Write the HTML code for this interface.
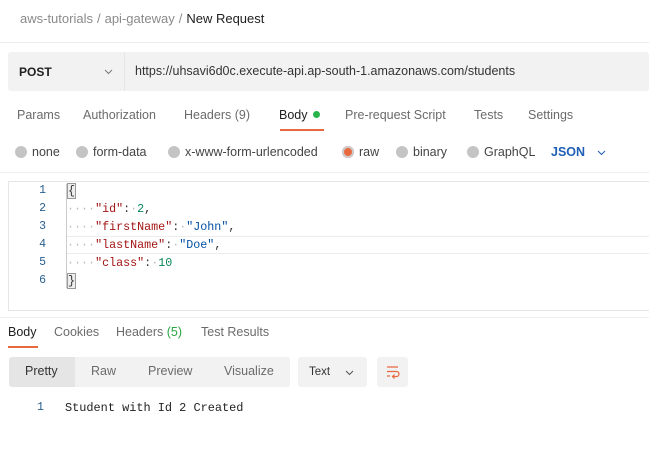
<!DOCTYPE html>
<html><head><meta charset="utf-8"><style>
*{margin:0;padding:0;box-sizing:border-box}
body{width:649px;height:454px;background:#fff;font-family:"Liberation Sans",sans-serif;position:relative;overflow:hidden;color:#212121}
.a{position:absolute;white-space:nowrap}
.g{color:#6b6b6b}
.mono{font-family:"Liberation Mono",monospace;font-size:10px}
.dot{display:inline-block;width:12px;height:12px;border-radius:50%;background:#c4c4c4;vertical-align:-2px;margin-right:5px}
.sl{color:#8a8a8a;margin:0 4px}
</style></head><body>
<div class="a" style="left:20px;top:11px;font-size:13px"><span style="color:#8a8a8a">aws-tutorials</span><span class="sl">/</span><span style="color:#8a8a8a">api-gateway</span><span class="sl">/</span><span style="color:#212121">New Request</span></div>
<div class="a" style="left:0;top:42px;width:649px;height:1px;background:#ececec"></div>
<div class="a" style="left:8px;top:52px;width:641px;height:39px;background:#f2f2f2;border-radius:3px"></div>
<div class="a" style="left:124px;top:52px;width:1px;height:39px;background:#e6e6e6"></div>
<div class="a" style="left:19px;top:65px;font-size:12px;font-weight:bold;color:#212121">POST</div>
<svg class="a" style="left:104px;top:69px" width="9" height="6" viewBox="0 0 9 6"><path d="M1 1 4.5 4.5 8 1" fill="none" stroke="#777" stroke-width="1"/></svg>
<div class="a" style="left:135px;top:64px;font-size:12.5px;color:#333">https://uhsavi6d0c.execute-api.ap-south-1.amazonaws.com/students</div>
<div class="a g" style="top:108px;left:17px;font-size:12.5px">Params</div>
<div class="a g" style="top:108px;left:83px;font-size:12.5px">Authorization</div>
<div class="a g" style="top:108px;left:184px;font-size:12.5px">Headers <span>(9)</span></div>
<div class="a" style="top:108px;left:279px;font-size:12.5px;color:#212121">Body <span style="display:inline-block;width:7px;height:7px;border-radius:50%;background:#28b34b;vertical-align:1px;margin-left:2px"></span></div>
<div class="a" style="left:280px;top:129px;width:44px;height:2px;background:#e8693f"></div>
<div class="a g" style="top:108px;left:345px;font-size:12.5px">Pre-request Script</div>
<div class="a g" style="top:108px;left:474px;font-size:12.5px">Tests</div>
<div class="a g" style="top:108px;left:528px;font-size:12.5px">Settings</div>
<div class="a" style="top:145px;left:15px;font-size:12.5px;color:#444"><span class="dot"></span>none</div>
<div class="a" style="top:145px;left:76px;font-size:12.5px;color:#444"><span class="dot"></span>form-data</div>
<div class="a" style="top:145px;left:168px;font-size:12.5px;color:#444"><span class="dot"></span>x-www-form-urlencoded</div>
<div class="a" style="top:145px;left:342px;font-size:12.5px;color:#444"><span class="dot" style="background:#e8693f;box-shadow:0 0 0 2px #ccc inset"></span>raw</div>
<div class="a" style="top:145px;left:396px;font-size:12.5px;color:#444"><span class="dot"></span>binary</div>
<div class="a" style="top:145px;left:467px;font-size:12.5px;color:#444"><span class="dot"></span>GraphQL</div>
<div class="a" style="top:145px;left:551px;font-size:12.5px;color:#1f5fb5;font-weight:bold">JSON</div>
<svg class="a" style="left:597px;top:150px" width="9" height="6" viewBox="0 0 9 6"><path d="M1 1 4.5 4.5 8 1" fill="none" stroke="#1f5fb5" stroke-width="1"/></svg>
<div class="a" style="left:0;top:172px;width:649px;height:1px;background:#eee"></div>
<div class="a" style="left:8px;top:181px;width:641px;height:130px;border:1px solid #e6e6e6;border-right:none"></div>
<div class="a" style="left:67px;top:236px;width:582px;height:18px;border-top:1px solid #ececec;border-bottom:1px solid #ececec"></div>
<div class="a" style="left:66px;top:184px;width:1px;height:104px;background:#ccc"></div>
<div class="a mono" style="left:36px;top:182px;line-height:18px;color:#2a6090;font-size:11.5px;text-align:right;width:10px">1<br>2<br>3<br>4<br>5<br>6</div>
<div class="a mono" style="left:67px;top:182px;line-height:18px;font-size:11.7px;color:#333">
<span style="border:1px solid #999;background:#eee">{</span><br>
<span style="color:#bbb">····</span><span style="color:#a31515">"id"</span>:<span style="color:#bbb">·</span><span style="color:#098658">2</span>,<br>
<span style="color:#bbb">····</span><span style="color:#a31515">"firstName"</span>:<span style="color:#bbb">·</span><span style="color:#0451a5">"John"</span>,<br>
<span style="color:#bbb">····</span><span style="color:#a31515">"lastName"</span>:<span style="color:#bbb">·</span><span style="color:#0451a5">"Doe"</span>,<br>
<span style="color:#bbb">····</span><span style="color:#a31515">"class"</span>:<span style="color:#bbb">·</span><span style="color:#098658">10</span><br>
<span style="border:1px solid #999;background:#eee">}</span></div>
<div class="a" style="left:0;top:317px;width:649px;height:1px;background:#eee"></div>
<div class="a" style="top:325px;left:8px;font-size:12.5px;color:#212121">Body</div>
<div class="a g" style="top:325px;left:54px;font-size:12.5px">Cookies</div>
<div class="a g" style="top:325px;left:116px;font-size:12.5px">Headers <span style="color:#28a745">(5)</span></div>
<div class="a g" style="top:325px;left:201px;font-size:12.5px">Test Results</div>
<div class="a" style="left:8px;top:346px;width:30px;height:2px;background:#e8693f"></div>
<div class="a" style="left:9px;top:357px;width:281px;height:30px;background:#f2f2f2;border-radius:3px"></div>
<div class="a" style="left:9px;top:357px;width:66px;height:30px;background:#e5e5e5;border-radius:3px 0 0 3px"></div>
<div class="a" style="top:364px;left:25px;font-size:12.5px;color:#333">Pretty</div>
<div class="a g" style="top:364px;left:91px;font-size:12.5px">Raw</div>
<div class="a g" style="top:364px;left:148px;font-size:12.5px">Preview</div>
<div class="a g" style="top:364px;left:224px;font-size:12.5px">Visualize</div>
<div class="a" style="left:298px;top:357px;width:69px;height:30px;background:#f2f2f2;border-radius:3px"></div>
<div class="a" style="top:366px;left:309px;font-size:11.5px;color:#333">Text</div>
<svg class="a" style="left:345px;top:370px" width="9" height="6" viewBox="0 0 9 6"><path d="M1 1 4.5 4.5 8 1" fill="none" stroke="#555" stroke-width="1"/></svg>
<div class="a" style="left:377px;top:357px;width:31px;height:30px;background:#f2f2f2;border-radius:3px"></div>
<svg class="a" style="left:384px;top:364px" width="17" height="16" viewBox="0 0 17 16"><path d="M3 3H14M3 7.5H12.5a2.5 2.5 0 0 1 0 5H9M10.5 10.5 8.5 12.5 10.5 14.5M3 12H6" fill="none" stroke="#e8693f" stroke-width="1.2"/></svg>
<div class="a mono" style="left:37px;top:401px;font-size:11.5px;color:#2a6090">1</div>
<div class="a mono" style="left:65px;top:401px;font-size:11.9px;color:#222">Student with Id 2 Created</div>
</body></html>
